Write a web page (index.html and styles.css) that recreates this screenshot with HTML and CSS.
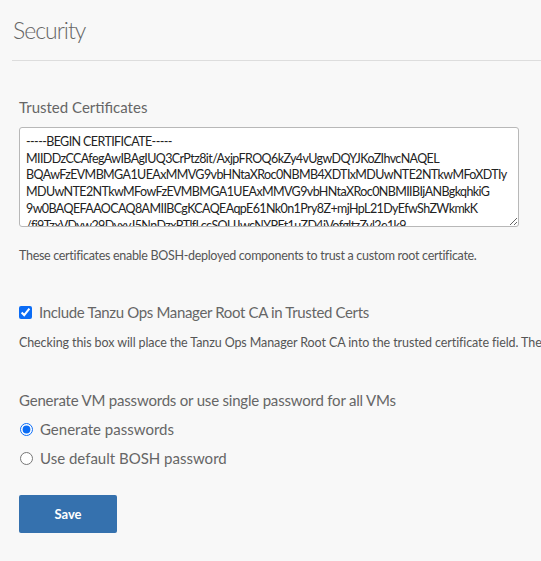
FILE: index.html
```html
<!DOCTYPE html>
<html>
<head>
<meta charset="utf-8">
<link rel="stylesheet" href="styles.css">
</head>
<body>
<div class="page">
  <header class="header">
    <h1 class="title">Security</h1>
  </header>
  <form class="form">
    <div class="field">
      <label class="field-label" for="certs">Trusted Certificates</label>
      <textarea id="certs" class="certs" spellcheck="false">-----BEGIN CERTIFICATE-----
MIIDDzCCAfegAwIBAgIUQ3CrPtz8it/AxjpFROQ6kZy4vUgwDQYJKoZIhvcNAQEL
BQAwFzEVMBMGA1UEAxMMVG9vbHNtaXRoc0NBMB4XDTIxMDUwNTE2NTkwMFoXDTIy
MDUwNTE2NTkwMFowFzEVMBMGA1UEAxMMVG9vbHNtaXRoc0NBMIIBIjANBgkqhkiG
9w0BAQEFAAOCAQ8AMIIBCgKCAQEAqpE61Nk0n1Pry8Z+mjHpL21DyEfwShZWkmkK
/fi9TzxVDyw29DyxyJ5NnDzxPTlfLccSQUJwcNYPEt1uZD4jVofgltzZvl2e1k9
-----END CERTIFICATE-----</textarea>
      <p class="help">These certificates enable BOSH-deployed components to trust a custom root certificate.</p>
    </div>
    <div class="field field-check">
      <label class="check-row">
        <input type="checkbox" class="check" checked>
        <span>Include Tanzu Ops Manager Root CA in Trusted Certs</span>
      </label>
      <p class="help nowrap">Checking this box will place the Tanzu Ops Manager Root CA into the trusted certificate field. The BOSH Director will then include this CA.</p>
    </div>
    <fieldset class="field field-radio">
      <legend class="field-label">Generate VM passwords or use single password for all VMs</legend>
      <label class="radio-row">
        <input type="radio" name="pw" class="radio" checked>
        <span>Generate passwords</span>
      </label>
      <label class="radio-row">
        <input type="radio" name="pw" class="radio">
        <span>Use default BOSH password</span>
      </label>
    </fieldset>
    <div class="actions">
      <button type="button" class="save">Save</button>
    </div>
  </form>
</div>
</body>
</html>
```
FILE: styles.css
```css
html, body {
  margin: 0;
  padding: 0;
  background: #f8f8f8;
  overflow: hidden;
}
body {
  font-family: Lato, "Open Sans", sans-serif;
  color: #666;
  width: 541px;
  height: 561px;
}
.page {
  width: 541px;
  overflow: hidden;
}
.header {
  margin-left: 12px;
  border-bottom: 1px solid #dddddd;
  padding: 17px 0 16px 1px;
}
.title {
  margin: 0;
  font-size: 23px;
  font-weight: 300;
  line-height: 27px;
  letter-spacing: -1px;
  color: #666;
}
.form {
  padding: 36px 0 0 19px;
  display: flex;
  flex-direction: column;
}
.field {
  display: flex;
  flex-direction: column;
  margin: 0;
  padding: 0;
  border: 0;
  min-width: 0;
}
.field-label {
  font-size: 15px;
  line-height: 20px;
  color: #666;
  margin: 0 0 10px 0;
  padding: 0;
}
.field-radio .field-label {
  letter-spacing: -0.2px;
  margin-bottom: 9px;
}
.certs {
  box-sizing: border-box;
  width: 500px;
  height: 100px;
  margin: 0;
  padding: 6px 6px 4px 6px;
  border: 1px solid #b8b8b8;
  border-radius: 3px;
  background: #fff;
  font-family: Lato, sans-serif;
  font-size: 12.5px;
  line-height: 16.7px;
  letter-spacing: -0.6px;
  color: #222;
  resize: vertical;
  white-space: pre;
  overflow: hidden;
}
.help {
  margin: 21px 0 0 0;
  font-size: 12.5px;
  line-height: 16px;
  letter-spacing: -0.3px;
  color: #555;
}
.nowrap {
  white-space: nowrap;
}
.field-check {
  margin-top: 38px;
}
.check-row, .radio-row {
  display: flex;
  align-items: center;
  font-size: 15px;
  line-height: 20px;
  color: #666;
}
.check-row {
  letter-spacing: -0.35px;
}
.check {
  width: 13px;
  height: 13px;
  margin: 0 7px 0 0;
  accent-color: #0b6cf5;
}
.help.nowrap {
  margin-top: 13px;
  letter-spacing: -0.1px;
}
.field-radio {
  margin-top: 39px;
}
.radio-row {
  margin-bottom: 9px;
}
.radio {
  width: 13px;
  height: 13px;
  margin: 0 7px 0 1px;
  accent-color: #0b6cf5;
}
.actions {
  margin-top: 18px;
}
.save {
  width: 98px;
  height: 38px;
  border: 0;
  border-radius: 2px;
  background: #3571ae;
  color: #fff;
  font-family: Lato, sans-serif;
  font-weight: 700;
  font-size: 13px;
}
```
